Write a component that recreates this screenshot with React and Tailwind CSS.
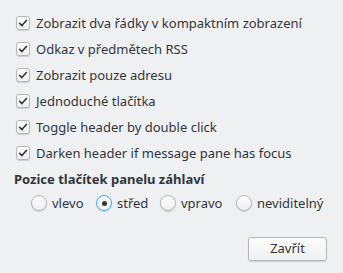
const checks = [
  'Zobrazit dva řádky v kompaktním zobrazení',
  'Odkaz v předmětech RSS',
  'Zobrazit pouze adresu',
  'Jednoduché tlačítka',
  'Toggle header by double click',
  'Darken header if message pane has focus',
]

const radios = [
  { label: 'vlevo', on: false },
  { label: 'střed', on: true },
  { label: 'vpravo', on: false },
  { label: 'neviditelný', on: false },
]

function CheckBox() {
  return (
    <span className="flex h-[14px] w-[14px] shrink-0 items-center justify-center rounded-[3px] border border-[#b5b7b9] bg-gradient-to-b from-[#fcfcfc] to-[#eff0f1] shadow-[0_1px_1px_rgba(0,0,0,0.15)]">
      <svg width="10" height="10" viewBox="0 0 10 10" fill="none">
        <path d="M1.6 5.3 L3.9 7.6 L8.4 2.4" stroke="#31363b" strokeWidth="1.6" strokeLinecap="round" strokeLinejoin="round" />
      </svg>
    </span>
  )
}

function Radio({ on }) {
  return (
    <span
      className={
        'flex h-[16px] w-[16px] shrink-0 items-center justify-center rounded-full border bg-gradient-to-b from-[#fcfcfc] to-[#eff0f1] shadow-[0_1px_1px_rgba(0,0,0,0.15)] ' +
        (on ? 'border-[#3daee9]' : 'border-[#b5b7b9]')
      }
    >
      {on && <span className="h-[5px] w-[5px] rounded-full bg-[#31363b]" />}
    </span>
  )
}

export default function App() {
  return (
    <div
      className="h-[273px] w-[343px] overflow-hidden bg-[#eff0f1] text-[13px] text-[#31363b]"
      style={{ fontFamily: '"Noto Sans", "Open Sans", sans-serif' }}
    >
      <div className="flex flex-col gap-[12px] pl-[16px] pt-[16px]">
        {checks.map((c) => (
          <div key={c} className="flex h-[14px] items-center gap-[6px] leading-none">
            <CheckBox />
            <span>{c}</span>
          </div>
        ))}
      </div>
      <div className="mt-[10px] pl-[14px] font-bold leading-[18px]">Pozice tlačítek panelu záhlaví</div>
      <div className="mt-[7px] flex items-center pl-[31px] leading-none">
        {radios.map((r, i) => (
          <div
            key={r.label}
            className={
              'flex items-center gap-[5px] ' +
              (i === 0 ? 'w-[65px]' : i === 1 ? 'w-[64px]' : i === 2 ? 'w-[76px]' : '')
            }
          >
            <Radio on={r.on} />
            <span>{r.label}</span>
          </div>
        ))}
      </div>
      <div className="mt-[26px] flex justify-end pr-[16px]">
        <button className="h-[24px] w-[79px] rounded-[3px] border border-[#b5b7b9] bg-gradient-to-b from-[#fcfcfc] to-[#f0f1f2] text-[13px] text-[#31363b] shadow-[0_1px_1px_rgba(0,0,0,0.15)]">
          Zavřít
        </button>
      </div>
    </div>
  )
}
